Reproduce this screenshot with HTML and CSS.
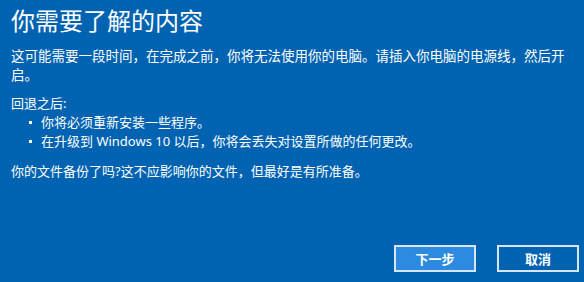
FILE: index.html
```html
<!DOCTYPE html>
<html lang="zh-CN">
<head>
<meta charset="utf-8">
<link rel="stylesheet" href="styles.css">
</head>
<body>
<div class="dialog">
  <h1 class="title">你需要了解的内容</h1>
  <p class="intro">这可能需要一段时间，在完成之前，你将无法使用你的电脑。请插入你电脑的电源线，然后开启。</p>
  <p class="label">回退之后:</p>
  <ul class="list">
    <li>你将必须重新安装一些程序。</li>
    <li>在升级到 Windows 10 以后，你将会丢失对设置所做的任何更改。</li>
  </ul>
  <p class="note">你的文件备份了吗?这不应影响你的文件，但最好是有所准备。</p>
  <div class="actions">
    <button class="btn btn-primary">下一步</button>
    <button class="btn">取消</button>
  </div>
</div>
</body>
</html>
```
FILE: styles.css
```css
html, body {
  margin: 0;
  padding: 0;
}
body {
  background: #0063b1;
  color: #ffffff;
  font-family: "Noto Sans", "Noto Sans CJK SC", sans-serif;
  width: 584px;
  height: 282px;
  overflow: hidden;
}
.dialog {
  box-sizing: border-box;
  height: 282px;
  padding: 7px 5px 10px 11px;
  display: flex;
  flex-direction: column;
}
.title {
  margin: 0;
  font-size: 24px;
  font-weight: normal;
  line-height: 28px;
}
.intro {
  margin: 12px 8px 0 0;
  font-size: 13.5px;
  line-height: 19px;
}
.label {
  margin: 9px 0 0;
  font-size: 13px;
  line-height: 19px;
}
.list {
  margin: 0;
  padding: 0 0 0 18px;
  list-style: none;
  font-size: 13px;
  line-height: 19px;
}
.list li {
  display: flex;
  align-items: center;
  gap: 9px;
}
.list li::before {
  content: "";
  width: 3px;
  height: 3px;
  background: #ffffff;
  flex: none;
}
.note {
  margin: 11px 0 0;
  font-size: 13px;
  line-height: 19px;
}
.actions {
  margin-top: auto;
  display: flex;
  justify-content: flex-end;
  gap: 21px;
}
.btn {
  box-sizing: border-box;
  width: 82px;
  height: 27px;
  border: 2px solid #d6e6f5;
  background: transparent;
  color: #ffffff;
  font-family: "Noto Sans CJK SC", sans-serif;
  font-size: 13px;
  font-weight: bold;
  padding: 0;
}
.btn-primary {
  background: #2c8be0;
}
```
